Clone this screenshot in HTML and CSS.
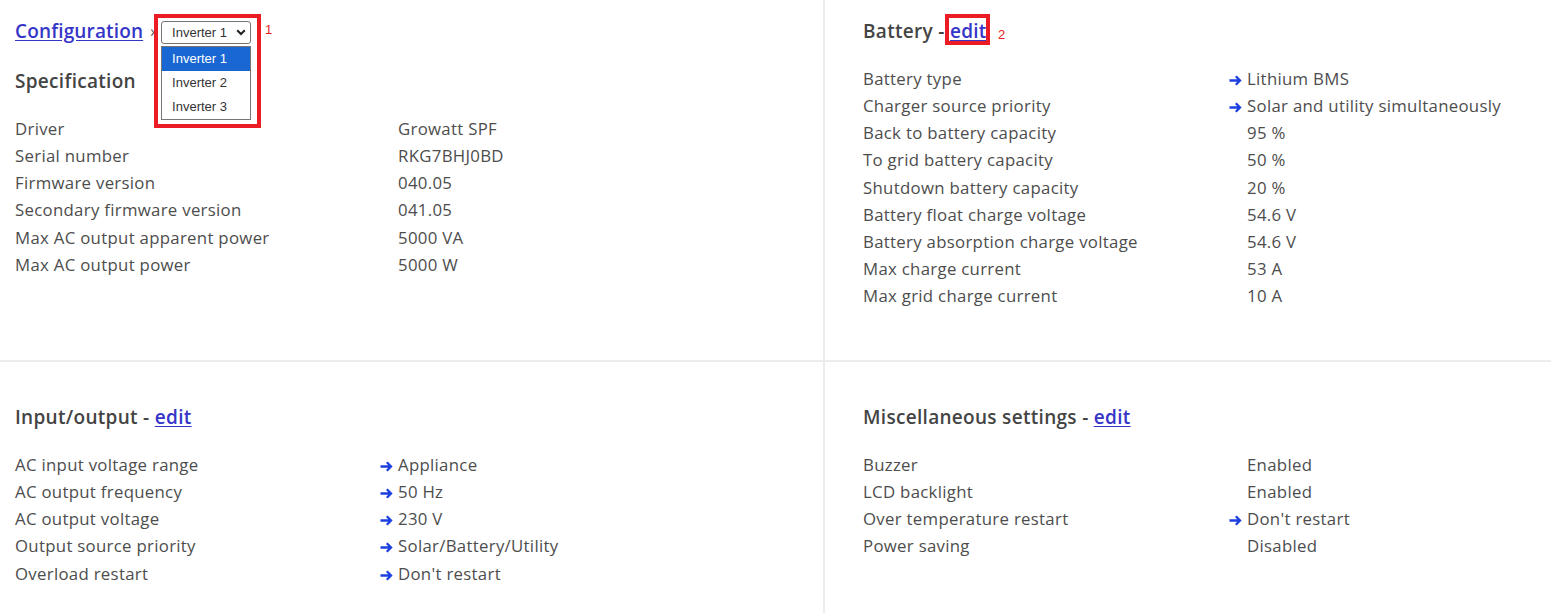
FILE: index.html
```html
<!DOCTYPE html>
<html lang="en">
<head>
<meta charset="utf-8">
<title>Configuration</title>
<link rel="stylesheet" href="styles.css">
</head>
<body>
<div class="grid">
  <section class="cell cell-left cell-top">
    <div class="crumbs">
      <a class="link" href="#">Configuration</a>
      <span class="sep">›</span>
      <div class="select-wrap">
        <div class="select">
          <span>Inverter 1</span>
          <svg class="chev" width="10" height="7" viewBox="0 0 10 7"><path d="M1.2 1.2 L5 5 L8.8 1.2" fill="none" stroke="#222" stroke-width="2"/></svg>
        </div>
        <ul class="options">
          <li class="opt opt-active">Inverter 1</li>
          <li class="opt">Inverter 2</li>
          <li class="opt">Inverter 3</li>
        </ul>
        <span class="mark mark-select"></span>
        <span class="mark-num num-1">1</span>
      </div>
    </div>
    <h2 class="heading">Specification</h2>
    <div class="kv kv-left">
      <div class="k">Driver</div><div class="v"><span class="arr"></span>Growatt SPF</div>
      <div class="k">Serial number</div><div class="v"><span class="arr"></span>RKG7BHJ0BD</div>
      <div class="k">Firmware version</div><div class="v"><span class="arr"></span>040.05</div>
      <div class="k">Secondary firmware version</div><div class="v"><span class="arr"></span>041.05</div>
      <div class="k">Max AC output apparent power</div><div class="v"><span class="arr"></span>5000 VA</div>
      <div class="k">Max AC output power</div><div class="v"><span class="arr"></span>5000 W</div>
    </div>
  </section>

  <section class="cell cell-right cell-top">
    <h2 class="heading">Battery - <span class="edit-wrap"><a class="link" href="#">edit</a><span class="mark mark-edit"></span><span class="mark-num num-2">2</span></span></h2>
    <div class="kv kv-right">
      <div class="k">Battery type</div><div class="v"><span class="arr"><svg width="13" height="11" viewBox="0 0 13 11"><path d="M0.5 5.5 H11 M6.8 1.3 L11 5.5 L6.8 9.7" fill="none" stroke="#1c3fe0" stroke-width="2.3"/></svg></span>Lithium BMS</div>
      <div class="k">Charger source priority</div><div class="v"><span class="arr"><svg width="13" height="11" viewBox="0 0 13 11"><path d="M0.5 5.5 H11 M6.8 1.3 L11 5.5 L6.8 9.7" fill="none" stroke="#1c3fe0" stroke-width="2.3"/></svg></span>Solar and utility simultaneously</div>
      <div class="k">Back to battery capacity</div><div class="v"><span class="arr"></span>95 %</div>
      <div class="k">To grid battery capacity</div><div class="v"><span class="arr"></span>50 %</div>
      <div class="k">Shutdown battery capacity</div><div class="v"><span class="arr"></span>20 %</div>
      <div class="k">Battery float charge voltage</div><div class="v"><span class="arr"></span>54.6 V</div>
      <div class="k">Battery absorption charge voltage</div><div class="v"><span class="arr"></span>54.6 V</div>
      <div class="k">Max charge current</div><div class="v"><span class="arr"></span>53 A</div>
      <div class="k">Max grid charge current</div><div class="v"><span class="arr"></span>10 A</div>
    </div>
  </section>

  <section class="cell cell-left cell-bottom">
    <h2 class="heading">Input/output - <a class="link" href="#">edit</a></h2>
    <div class="kv kv-left">
      <div class="k">AC input voltage range</div><div class="v"><span class="arr"><svg width="13" height="11" viewBox="0 0 13 11"><path d="M0.5 5.5 H11 M6.8 1.3 L11 5.5 L6.8 9.7" fill="none" stroke="#1c3fe0" stroke-width="2.3"/></svg></span>Appliance</div>
      <div class="k">AC output frequency</div><div class="v"><span class="arr"><svg width="13" height="11" viewBox="0 0 13 11"><path d="M0.5 5.5 H11 M6.8 1.3 L11 5.5 L6.8 9.7" fill="none" stroke="#1c3fe0" stroke-width="2.3"/></svg></span>50 Hz</div>
      <div class="k">AC output voltage</div><div class="v"><span class="arr"><svg width="13" height="11" viewBox="0 0 13 11"><path d="M0.5 5.5 H11 M6.8 1.3 L11 5.5 L6.8 9.7" fill="none" stroke="#1c3fe0" stroke-width="2.3"/></svg></span>230 V</div>
      <div class="k">Output source priority</div><div class="v"><span class="arr"><svg width="13" height="11" viewBox="0 0 13 11"><path d="M0.5 5.5 H11 M6.8 1.3 L11 5.5 L6.8 9.7" fill="none" stroke="#1c3fe0" stroke-width="2.3"/></svg></span>Solar/Battery/Utility</div>
      <div class="k">Overload restart</div><div class="v"><span class="arr"><svg width="13" height="11" viewBox="0 0 13 11"><path d="M0.5 5.5 H11 M6.8 1.3 L11 5.5 L6.8 9.7" fill="none" stroke="#1c3fe0" stroke-width="2.3"/></svg></span>Don't restart</div>
    </div>
  </section>

  <section class="cell cell-right cell-bottom">
    <h2 class="heading heading-misc">Miscellaneous settings - <a class="link" href="#">edit</a></h2>
    <div class="kv kv-right">
      <div class="k">Buzzer</div><div class="v"><span class="arr"></span>Enabled</div>
      <div class="k">LCD backlight</div><div class="v"><span class="arr"></span>Enabled</div>
      <div class="k">Over temperature restart</div><div class="v"><span class="arr"><svg width="13" height="11" viewBox="0 0 13 11"><path d="M0.5 5.5 H11 M6.8 1.3 L11 5.5 L6.8 9.7" fill="none" stroke="#1c3fe0" stroke-width="2.3"/></svg></span>Don't restart</div>
      <div class="k">Power saving</div><div class="v"><span class="arr"></span>Disabled</div>
    </div>
  </section>
</div>
</body>
</html>
```

FILE: styles.css
```css
html, body {
  margin: 0;
  padding: 0;
  background: #ffffff;
}

body {
  font-family: "Open Sans", "Noto Sans", sans-serif;
  font-size: 16.8px;
  letter-spacing: 0.3px;
  color: #4d4d4d;
}

.grid {
  display: grid;
  grid-template-columns: 823px 1fr;
  grid-template-rows: 360px 260px;
  gap: 2px;
  background: #ececec;
  height: 622px;
}

.cell {
  background: #ffffff;
}

.cell-left {
  padding-left: 15px;
}

.cell-right {
  padding-left: 38px;
}

.cell-top {
  padding-top: 19px;
}

.cell-bottom {
  padding-top: 43px;
}

.crumbs {
  display: flex;
  align-items: center;
  height: 24px;
  font-size: 19px;
  font-weight: 600;
  letter-spacing: 0.15px;
}

.sep {
  font-size: 16px;
  font-weight: 400;
  color: #555;
  margin: 0 6px 0 7px;
}

.link {
  color: #3535c8;
  text-decoration: underline;
  text-underline-offset: 2px;
}

.heading {
  margin: 0;
  font-size: 19px;
  font-weight: 600;
  line-height: 24px;
  letter-spacing: 0.3px;
  color: #444;
}

.cell-top .crumbs + .heading {
  margin-top: 26px;
}

.kv {
  display: grid;
  margin-top: 22px;
  line-height: 27.15px;
}

.kv-left {
  grid-template-columns: 365px 1fr;
}

.kv-right {
  grid-template-columns: 366px 1fr;
}

.arr {
  display: inline-block;
  width: 18px;
}

.arr svg {
  display: inline-block;
  vertical-align: -1px;
}

/* select */
.select-wrap {
  position: relative;
  margin-top: 3px;
  letter-spacing: 0;
}

.select {
  box-sizing: border-box;
  width: 90px;
  height: 23px;
  border: 1px solid #767676;
  border-radius: 3px;
  display: flex;
  align-items: center;
  justify-content: space-between;
  padding: 0 4px 0 10px;
  font-family: "Liberation Sans", Arial, sans-serif;
  font-size: 13px;
  font-weight: 400;
  color: #333;
  background: #fff;
}

.chev {
  display: block;
}

.options {
  position: absolute;
  left: 0;
  top: 25px;
  margin: 0;
  padding: 0;
  list-style: none;
  box-sizing: border-box;
  width: 90px;
  border: 1px solid #767676;
  background: #fff;
  font-family: "Liberation Sans", Arial, sans-serif;
  font-size: 13px;
  font-weight: 400;
  color: #333;
}

.opt {
  height: 24px;
  line-height: 24px;
  padding-left: 10px;
}

.opt-active {
  background: #1967d2;
  color: #fff;
}

.mark {
  position: absolute;
  border: 4px solid #ec1c24;
  box-sizing: border-box;
  pointer-events: none;
}

.mark-select {
  left: -7px;
  top: -7px;
  width: 107px;
  height: 114px;
}

.mark-num {
  position: absolute;
  font-family: "Liberation Sans", Arial, sans-serif;
  font-size: 13px;
  font-weight: 400;
  letter-spacing: 0;
  color: #ec1c24;
}

.num-1 {
  left: 104px;
  top: 1px;
}

.edit-wrap {
  position: relative;
}

.mark-edit {
  left: -5px;
  top: -4px;
  width: 45px;
  height: 31px;
}

.num-2 {
  left: 48px;
  top: 5px;
}
```
